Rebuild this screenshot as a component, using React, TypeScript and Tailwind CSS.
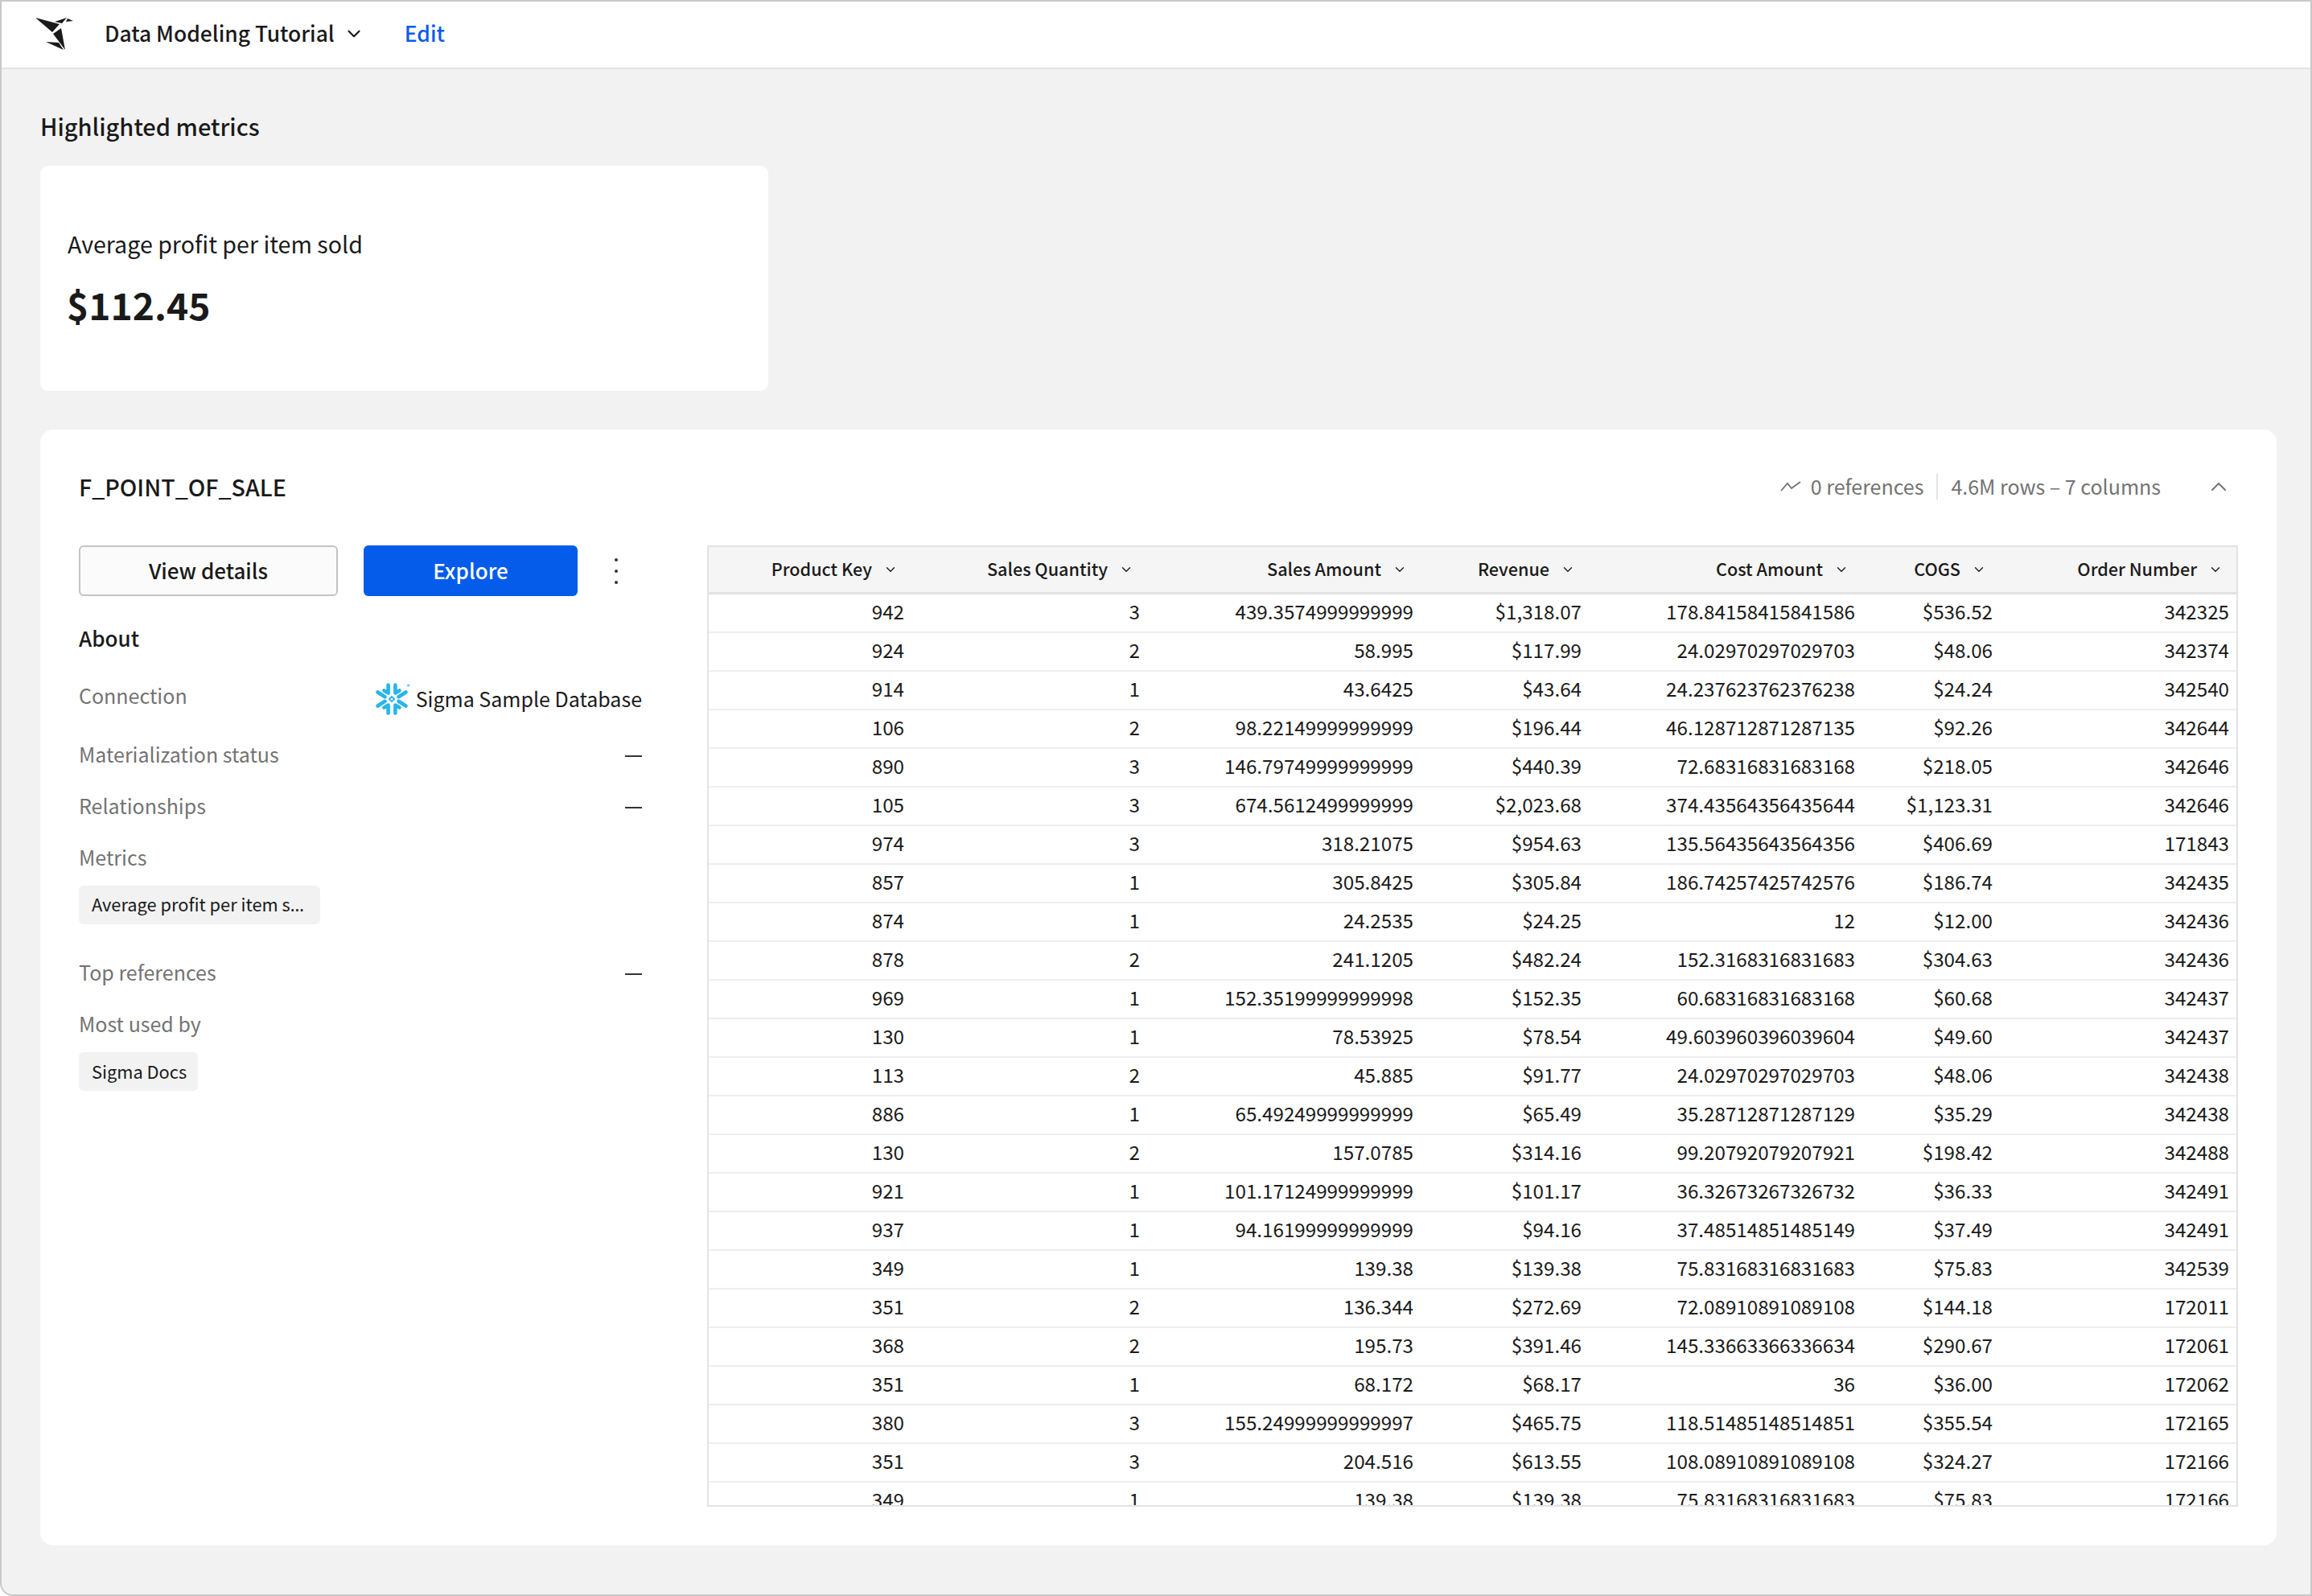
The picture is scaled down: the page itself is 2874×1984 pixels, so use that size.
import { ChevronDown, ChevronUp } from 'lucide-react'

const font = '[font-family:"Noto_Sans_CJK_JP","Noto_Sans",sans-serif]'

const columns = [
  { label: 'Product Key' },
  { label: 'Sales Quantity' },
  { label: 'Sales Amount' },
  { label: 'Revenue' },
  { label: 'Cost Amount' },
  { label: 'COGS' },
  { label: 'Order Number' },
]

const rows = [
  ['942', '3', '439.3574999999999', '$1,318.07', '178.84158415841586', '$536.52', '342325'],
  ['924', '2', '58.995', '$117.99', '24.02970297029703', '$48.06', '342374'],
  ['914', '1', '43.6425', '$43.64', '24.237623762376238', '$24.24', '342540'],
  ['106', '2', '98.22149999999999', '$196.44', '46.128712871287135', '$92.26', '342644'],
  ['890', '3', '146.79749999999999', '$440.39', '72.68316831683168', '$218.05', '342646'],
  ['105', '3', '674.5612499999999', '$2,023.68', '374.43564356435644', '$1,123.31', '342646'],
  ['974', '3', '318.21075', '$954.63', '135.56435643564356', '$406.69', '171843'],
  ['857', '1', '305.8425', '$305.84', '186.74257425742576', '$186.74', '342435'],
  ['874', '1', '24.2535', '$24.25', '12', '$12.00', '342436'],
  ['878', '2', '241.1205', '$482.24', '152.3168316831683', '$304.63', '342436'],
  ['969', '1', '152.35199999999998', '$152.35', '60.68316831683168', '$60.68', '342437'],
  ['130', '1', '78.53925', '$78.54', '49.603960396039604', '$49.60', '342437'],
  ['113', '2', '45.885', '$91.77', '24.02970297029703', '$48.06', '342438'],
  ['886', '1', '65.49249999999999', '$65.49', '35.28712871287129', '$35.29', '342438'],
  ['130', '2', '157.0785', '$314.16', '99.20792079207921', '$198.42', '342488'],
  ['921', '1', '101.17124999999999', '$101.17', '36.32673267326732', '$36.33', '342491'],
  ['937', '1', '94.16199999999999', '$94.16', '37.48514851485149', '$37.49', '342491'],
  ['349', '1', '139.38', '$139.38', '75.83168316831683', '$75.83', '342539'],
  ['351', '2', '136.344', '$272.69', '72.08910891089108', '$144.18', '172011'],
  ['368', '2', '195.73', '$391.46', '145.33663366336634', '$290.67', '172061'],
  ['351', '1', '68.172', '$68.17', '36', '$36.00', '172062'],
  ['380', '3', '155.24999999999997', '$465.75', '118.51485148514851', '$355.54', '172165'],
  ['351', '3', '204.516', '$613.55', '108.08910891089108', '$324.27', '172166'],
  ['349', '1', '139.38', '$139.38', '75.83168316831683', '$75.83', '172166'],
]

const gridCols = 'grid grid-cols-[254px_293px_340px_209px_340px_171px_294px]'

const Logo = () => (
  <svg viewBox="40 20 50 42" className="h-[42px] w-[50px] shrink-0" fill="#1a1a1a">
    <polygon points="42,21 63,39 72,29" />
    <polygon points="66,26 81,21 75,28" />
    <polygon points="82,22 89,25 80,26" />
    <polygon points="74,34 64,41 79,61" />
    <polygon points="55,51 71,52 77,61" />
  </svg>
)

const Snowflake = () => (
  <svg viewBox="-23 -23 46 46" className="h-[46px] w-[46px] shrink-0" fill="none" stroke="#29b5e8" strokeWidth="4.6" strokeLinecap="round" strokeLinejoin="round">
    <path d="M-4.4 -17.5V-7.5L-9.5 -10.5M4.4 -17.5V-7.5L9.5 -10.5" />
    <path d="M-4.4 17.5V7.5L-9.5 10.5M4.4 17.5V7.5L9.5 10.5" />
    <path d="M-17.5 -8.5L-8.5 -2.8M-17.5 8.5L-8.5 2.8" />
    <path d="M17.5 -8.5L8.5 -2.8M17.5 8.5L8.5 2.8" />
    <path d="M0 -3.2L3.2 0L0 3.2L-3.2 0Z" strokeWidth="1.8" />
    <circle cx="20.5" cy="-17" r="1" strokeWidth="1" />
  </svg>
)

const Trend = () => (
  <svg viewBox="0 0 26 16" className="h-[16px] w-[26px] shrink-0" fill="none" stroke="#737373" strokeWidth="1.8">
    <path d="M1 13L9 4L14 10L25 2" />
  </svg>
)

const Dash = () => <span className="h-[2px] w-[21px] translate-y-[2px] bg-[#333333]" />

const InfoRow = ({ label, top, children }: { label: string; top: string; children?: React.ReactNode }) => (
  <div className={`${top} flex h-[36px] items-center justify-between`}>
    <span className="text-[25px] text-[#737373]">{label}</span>
    {children}
  </div>
)

const Chip = ({ children, width }: { children: React.ReactNode; width: string }) => (
  <div className={`${width} flex h-[48px] items-center whitespace-nowrap rounded-[6px] bg-[#f2f2f2] pl-[16px] text-[21.8px] text-[#1a1a1a]`}>
    <span>{children}</span>
  </div>
)

export default function App() {
  return (
    <div className={`${font} flex h-[1984px] w-[2874px] flex-col overflow-hidden rounded-bl-[16px] border-x-2 border-y-2 border-[#c8c8c8] bg-[#f2f2f2] text-[#1a1a1a]`}>
      <header className="flex h-[84px] shrink-0 items-center border-b-2 border-[#e3e3e3] bg-white pb-[3px] pl-[40px]">
        <Logo />
        <span className="ml-[38px] text-[26.4px] font-medium leading-none">Data Modeling Tutorial</span>
        <ChevronDown className="ml-[11px] size-[26px]" strokeWidth={2} />
        <a className="ml-[50px] text-[26.4px] font-medium leading-none text-[#0a5ce8]">Edit</a>
      </header>

      <main className="flex flex-col pl-[48px]">
        <h2 className="mt-[50px] text-[29px] font-medium leading-[40px]">Highlighted metrics</h2>
        <section className="mt-[30px] h-[280px] w-[905px] rounded-[10px] bg-white pl-[34px] pt-[77px]">
          <div className="text-[28.6px] leading-[40px]">Average profit per item sold</div>
          <div className="mt-[25px] -translate-x-[1px] text-[46.2px] font-semibold leading-[60px]">$112.45</div>
        </section>

        <section className="mt-[48px] h-[1387px] w-[2780px] rounded-[16px] bg-white px-[48px] pt-[47px]">
          <div className="flex h-[48px] items-center">
            <h3 className="text-[28.6px] font-medium">F_POINT_OF_SALE</h3>
            <div className="ml-auto flex items-center text-[25px] text-[#737373]">
              <Trend />
              <span className="ml-[12px]">0 references</span>
              <span className="mx-[16px] h-[32px] w-[2px] bg-[#e3e3e3]" />
              <span>4.6M rows – 7 columns</span>
              <ChevronUp className="ml-[56px] mr-[8px] size-[32px]" strokeWidth={1.5} />
            </div>
          </div>

          <div className="mt-[49px] flex gap-[81px]">
            <aside className="flex w-[700px] shrink-0 flex-col">
              <div className="flex items-center">
                <button className="h-[63px] w-[322px] rounded-[6px] border-2 border-[#c4c4c4] bg-[#fbfbfb] pb-[2px] text-[26px] font-medium">View details</button>
                <button className="ml-[32px] h-[63px] w-[266px] rounded-[6px] bg-[#055ceb] pb-[2px] text-[26px] font-medium text-white">Explore</button>
                <div className="ml-[46px] flex flex-col gap-[10px]">
                  <span className="size-[4px] rounded-full bg-[#333333]" />
                  <span className="size-[4px] rounded-full bg-[#333333]" />
                  <span className="size-[4px] rounded-full bg-[#333333]" />
                </div>
              </div>
              <div className="mt-[34px] h-[36px] text-[26px] font-medium leading-[36px]">About</div>
              <InfoRow label="Connection" top="mt-[36px]">
                <span className="flex translate-y-[4px] items-center text-[25px]">
                  <Snowflake />
                  <span className="ml-[7px]">Sigma Sample Database</span>
                </span>
              </InfoRow>
              <InfoRow label="Materialization status" top="mt-[37px]"><Dash /></InfoRow>
              <InfoRow label="Relationships" top="mt-[28px]"><Dash /></InfoRow>
              <InfoRow label="Metrics" top="mt-[28px]" />
              <div className="mt-[17px]">
                <Chip width="w-[300px]">
                  Average profit per item s<span className="[font-family:'Noto_Sans',sans-serif]">…</span>
                </Chip>
              </div>
              <InfoRow label="Top references" top="mt-[42px]"><Dash /></InfoRow>
              <InfoRow label="Most used by" top="mt-[28px]" />
              <div className="mt-[17px]"><Chip width="w-[148px]">Sigma Docs</Chip></div>
            </aside>

            <div className="h-[1195px] w-[1903px] overflow-hidden border-2 border-[#e3e3e3]">
              <div className={`${gridCols} h-[56px] items-center bg-[#f5f5f5] border-b-[3px] box-content border-[#e3e3e3]`}>
                {columns.map(c => (
                  <div key={c.label} className="flex items-center justify-end gap-[14px] pr-[19px] text-[21.6px] font-medium">
                    <span className="-translate-y-[1px]">{c.label}</span>
                    <ChevronDown className="size-[18px]" strokeWidth={1.8} />
                  </div>
                ))}
              </div>
              {rows.map((row, i) => (
                <div key={i} className={`${gridCols} h-[48px] items-center border-b-2 border-[#eeeeee] text-[24.2px]`}>
                  {row.map((v, j) => (
                    <div key={j} className="-translate-y-[2px] pr-[11px] text-right">{v}</div>
                  ))}
                </div>
              ))}
            </div>
          </div>
        </section>
      </main>
    </div>
  )
}
